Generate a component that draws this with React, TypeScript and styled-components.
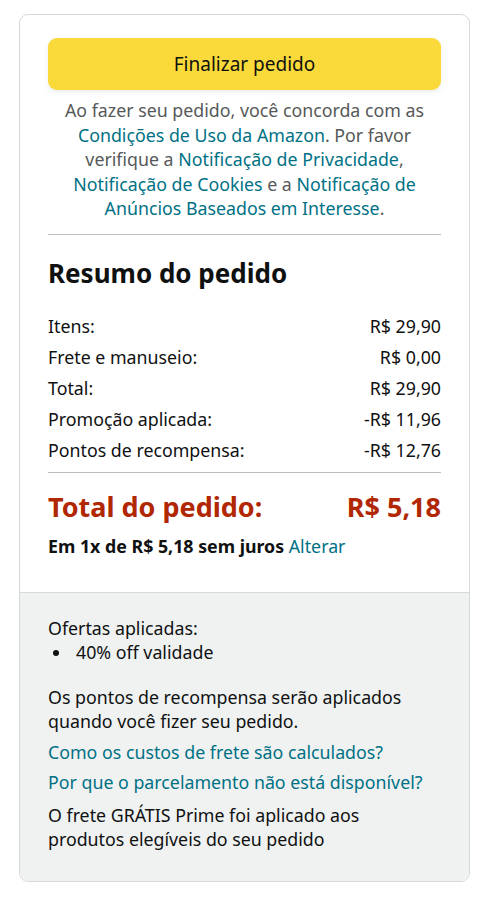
import React from 'react';
import styled, { createGlobalStyle } from 'styled-components';

const GlobalStyle = createGlobalStyle`
  body {
    margin: 0;
    background: #ffffff;
    font-family: 'Noto Sans', 'Liberation Sans', sans-serif;
    color: #0f1111;
  }
`;

const Card = styled.div`
  margin: 14px 0 0 19px;
  width: 451px;
  box-sizing: border-box;
  border: 1px solid #d5d9d9;
  border-radius: 9px;
  overflow: hidden;
  background: #ffffff;
`;

const Main = styled.div`
  padding: 23px 28px 33px;
`;

const PlaceButton = styled.button`
  display: block;
  width: 100%;
  height: 52px;
  border: none;
  border-radius: 9px;
  background: #fad93a;
  box-shadow: 0 2px 5px rgba(213, 217, 217, 0.5);
  font-family: inherit;
  font-size: 19px;
  color: #0f1111;
  cursor: pointer;
`;

const Agreement = styled.p`
  margin: 8px 0 0;
  text-align: center;
  font-size: 17.8px;
  line-height: 24.5px;
  color: #565959;
`;

const Link = styled.a`
  color: #007185;
  text-decoration: none;
`;

const Divider = styled.hr<{ $gap: number }>`
  border: none;
  border-top: 1px solid #bbbfbf;
  margin: ${p => p.$gap}px 0 0;
`;

const Title = styled.h2`
  margin: 22px 0 0;
  font-size: 26px;
  font-weight: 700;
  line-height: 32px;
`;

const Rows = styled.div`
  margin-top: 22px;
  display: flex;
  flex-direction: column;
`;

const Row = styled.div`
  display: flex;
  justify-content: space-between;
  font-size: 17.8px;
  line-height: 31px;
`;

const TotalRow = styled.div`
  margin-top: 14px;
  display: flex;
  justify-content: space-between;
  font-size: 27px;
  font-weight: 700;
  line-height: 40px;
  color: #b12704;
`;

const Installment = styled.div`
  margin-top: 7px;
  font-size: 17.8px;
  line-height: 25px;
  font-weight: 700;
`;

const PlainLink = styled(Link)`
  font-weight: 400;
`;

const Footer = styled.div`
  background: #f0f2f2;
  border-top: 1px solid #d5d9d9;
  padding: 23px 32px 29px 28px;
  font-size: 17.8px;
  line-height: 24.5px;
`;

const Offers = styled.ul`
  margin: 0;
  padding: 0;
  list-style: none;

  li {
    display: flex;
    align-items: center;
  }

  li::before {
    content: '';
    flex-shrink: 0;
    width: 6px;
    height: 6px;
    margin: 1px 17px 0 5px;
    border-radius: 50%;
    background: #0f1111;
  }
`;

const Para = styled.p<{ $gap?: number }>`
  margin: ${p => p.$gap ?? 6}px 0 0;
`;

const summary = [
  ['Itens:', 'R$ 29,90'],
  ['Frete e manuseio:', 'R$ 0,00'],
  ['Total:', 'R$ 29,90'],
  ['Promoção aplicada:', '-R$ 11,96'],
  ['Pontos de recompensa:', '-R$ 12,76'],
];

export default function App() {
  return (
    <>
      <GlobalStyle />
      <Card>
        <Main>
          <PlaceButton>Finalizar pedido</PlaceButton>
          <Agreement>
            Ao fazer seu pedido, você concorda com as{' '}
            <Link href="#">Condições de Uso da Amazon</Link>. Por favor verifique a{' '}
            <Link href="#">Notificação de Privacidade</Link>,{' '}
            <Link href="#">Notificação de Cookies</Link> e a{' '}
            <Link href="#">Notificação de Anúncios Baseados em Interesse</Link>.
          </Agreement>
          <Divider $gap={13} />
          <Title>Resumo do pedido</Title>
          <Rows>
            {summary.map(([label, value]) => (
              <Row key={label}>
                <span>{label}</span>
                <span>{value}</span>
              </Row>
            ))}
          </Rows>
          <Divider $gap={6} />
          <TotalRow>
            <span>Total do pedido:</span>
            <span>R$ 5,18</span>
          </TotalRow>
          <Installment>
            Em 1x de R$ 5,18 sem juros <PlainLink href="#">Alterar</PlainLink>
          </Installment>
        </Main>
        <Footer>
          <div>Ofertas aplicadas:</div>
          <Offers>
            <li>40% off validade</li>
          </Offers>
          <Para $gap={20}>
            Os pontos de recompensa serão aplicados quando você fizer seu pedido.
          </Para>
          <Para>
            <Link href="#">Como os custos de frete são calculados?</Link>
          </Para>
          <Para>
            <Link href="#">Por que o parcelamento não está disponível?</Link>
          </Para>
          <Para $gap={8}>O frete GRÁTIS Prime foi aplicado aos produtos elegíveis do seu pedido</Para>
        </Footer>
      </Card>
    </>
  );
}
